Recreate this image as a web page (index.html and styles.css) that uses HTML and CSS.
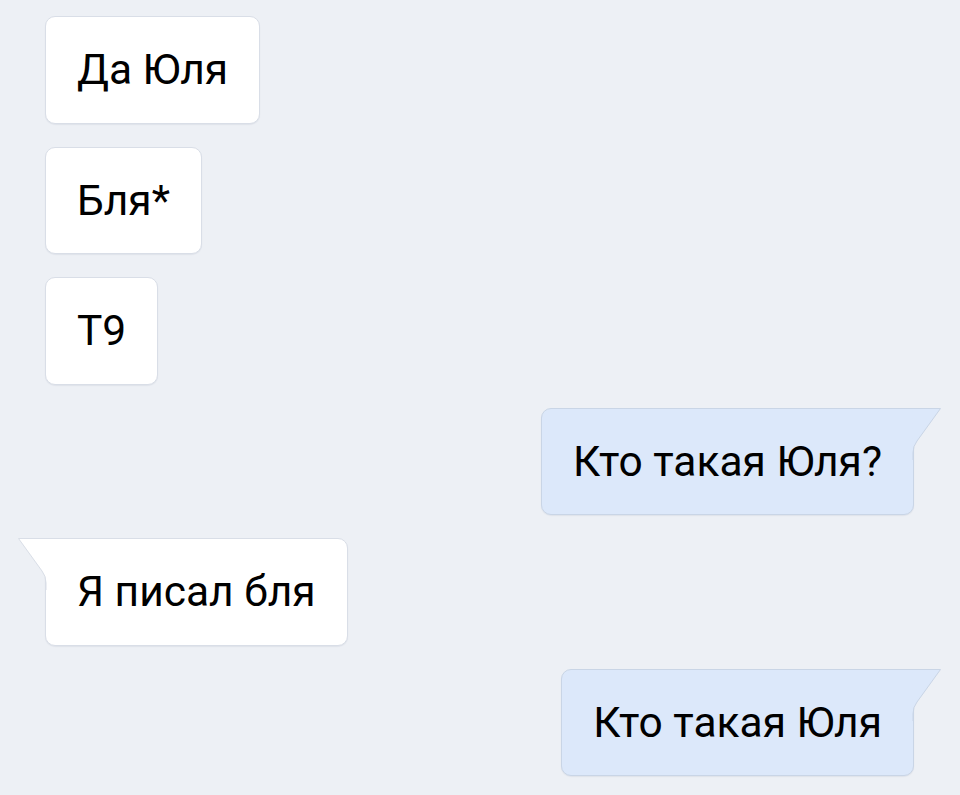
FILE: index.html
```html
<!DOCTYPE html>
<html lang="ru">
<head>
    <meta charset="UTF-8">
    <meta name="viewport" content="width=device-width, initial-scale=1.0">
    <title>Диалог</title>
    <link rel="stylesheet" href="styles.css">
</head>
<body>
    <div class="chat">
        <div class="msg in">Да Юля</div>
        <div class="msg in">Бля*</div>
        <div class="msg in">Т9</div>

        <div class="msg out tail">
            Кто такая Юля?
            <svg class="tail-svg" width="30" height="52" viewBox="0 0 30 52">
                <path d="M0 0.5 H28.5 L5 33 Q1 38 1 45 V52" />
            </svg>
        </div>

        <div class="msg in tail">
            Я писал бля
            <svg class="tail-svg" width="30" height="52" viewBox="0 0 30 52">
                <path d="M30 0.5 H1.5 L25 33 Q29 38 29 45 V52" />
            </svg>
        </div>

        <div class="msg out tail">
            Кто такая Юля
            <svg class="tail-svg" width="30" height="52" viewBox="0 0 30 52">
                <path d="M0 0.5 H28.5 L5 33 Q1 38 1 45 V52" />
            </svg>
        </div>
    </div>
</body>
</html>
```

FILE: styles.css
```css
body {
    margin: 0;
    background-color: #edf0f5;
    font-family: Roboto, "Liberation Sans", sans-serif;
    color: #000;
}

.chat {
    display: flex;
    flex-direction: column;
    gap: 23px;
    padding: 16px 46px 0 45px;
    width: 960px;
    height: 795px;
    box-sizing: border-box;
}

.msg {
    position: relative;
    box-sizing: border-box;
    height: 107.5px;
    padding: 0 31px;
    display: flex;
    align-items: center;
    font-size: 42.5px;
    border-radius: 10px;
    border: 1px solid #d9dee7;
    box-shadow: 0 1px 1px rgba(60, 80, 110, 0.08);
}

.in {
    align-self: flex-start;
    background-color: #fff;
}

.out {
    align-self: flex-end;
    background-color: #dce8fa;
    border-color: #c9d5e6;
}

.out.tail {
    border-top-right-radius: 0;
}

.in.tail {
    border-top-left-radius: 0;
}

.tail-svg {
    position: absolute;
    top: -1px;
    overflow: visible;
}

.out .tail-svg {
    right: -29px;
}

.in .tail-svg {
    left: -29px;
}

.tail-svg path {
    stroke-width: 1;
}

.out .tail-svg path {
    fill: #dce8fa;
    stroke: #c9d5e6;
}

.in .tail-svg path {
    fill: #fff;
    stroke: #d9dee7;
}
```
